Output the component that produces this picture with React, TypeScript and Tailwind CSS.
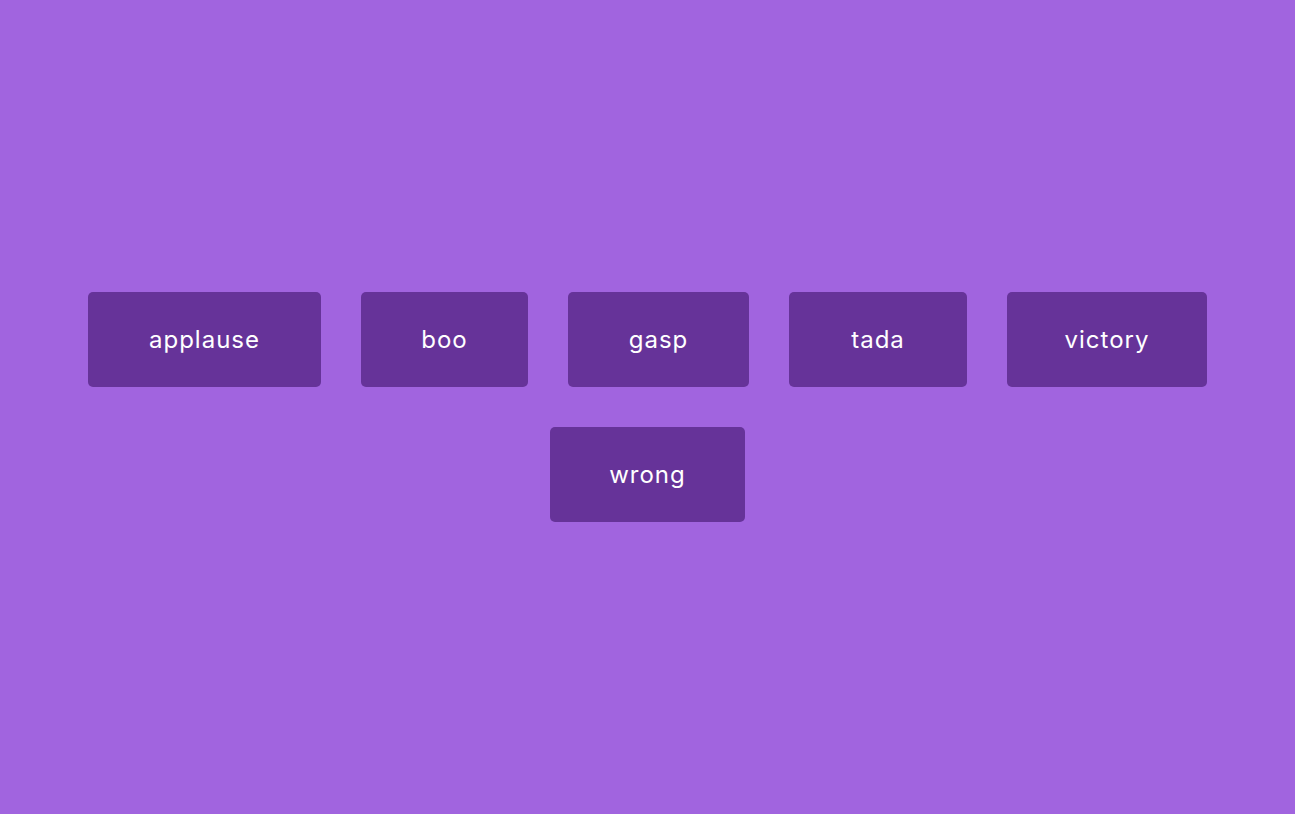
const sounds: { name: string; w: string }[] = [
  { name: "applause", w: "w-[233px]" },
  { name: "boo", w: "w-[167px]" },
  { name: "gasp", w: "w-[181px]" },
  { name: "tada", w: "w-[178px]" },
  { name: "victory", w: "w-[200px]" },
  { name: "wrong", w: "w-[195px]" },
];

export default function App() {
  return (
    <div className="flex h-[814px] w-full flex-wrap content-center items-center justify-center bg-[#a164df] text-center font-['Inter',sans-serif]">
      {sounds.map((s) => (
        <button
          key={s.name}
          className={`${s.w} m-[20px] flex h-[95px] items-center justify-center rounded-[5px] bg-[#663399] text-[24px] font-normal tracking-[1px] text-white`}
        >
          {s.name}
        </button>
      ))}
    </div>
  );
}
